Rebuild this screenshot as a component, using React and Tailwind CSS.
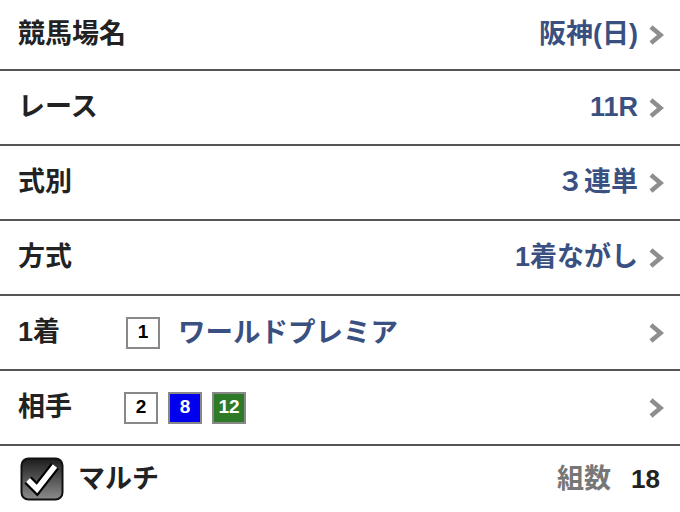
import React from "react";

const font = { fontFamily: '"Liberation Sans", "Noto Sans CJK JP", sans-serif' };

function Chevron() {
  return (
    <svg width="16" height="22" viewBox="0 0 16 22" className="shrink-0">
      <polyline points="3,3 12.5,11 3,19" fill="none" stroke="#8e8e8e" strokeWidth="4.5" strokeLinejoin="miter" />
    </svg>
  );
}

function Row({ label, value, h = "h-[75px]" }) {
  return (
    <div className={`${h} border-b-2 border-[#555] flex items-center pl-[18px] pr-[16px]`}>
      <div className="text-[27px] font-bold text-[#222] flex-1">{label}</div>
      <div className="text-[27px] font-bold text-[#3a5081] mr-[10px]">{value}</div>
      <Chevron />
    </div>
  );
}

function Badge({ n, cls }) {
  return (
    <div className={`w-[34px] h-[32px] border-2 border-[#888] flex items-center justify-center text-[19px] font-bold ${cls}`}>
      {n}
    </div>
  );
}

function Check() {
  return (
    <svg width="44" height="44" viewBox="0 0 44 44">
      <defs>
        <linearGradient id="cg" x1="0" y1="0" x2="0" y2="1">
          <stop offset="0" stopColor="#1c1c1c" />
          <stop offset="1" stopColor="#8c8c8c" />
        </linearGradient>
      </defs>
      <rect x="1.5" y="1.5" width="41" height="41" rx="7" fill="url(#cg)" stroke="#111" strokeWidth="2" />
      <path d="M8 23 L17 32 L35 9" fill="none" stroke="#000" strokeWidth="10" strokeLinejoin="miter" />
      <path d="M8 23 L17 32 L35 9" fill="none" stroke="#fff" strokeWidth="5.5" strokeLinejoin="miter" />
    </svg>
  );
}

export default function App() {
  return (
    <div className="w-[680px] h-[512px] overflow-hidden bg-white" style={font}>
      <Row label="競馬場名" value="阪神(日)" h="h-[71px]" />
      <Row label="レース" value="11R" />
      <Row label="式別" value="３連単" />
      <Row label="方式" value="1着ながし" />
      <div className="h-[75px] border-b-2 border-[#555] flex items-center pl-[18px] pr-[16px]">
        <div className="w-[108px] text-[27px] font-bold text-[#222]">1着</div>
        <Badge n="1" cls="bg-white text-black" />
        <div className="ml-[18px] text-[27.5px] font-bold text-[#3a5081] flex-1">ワールドプレミア</div>
        <Chevron />
      </div>
      <div className="h-[75px] border-b-2 border-[#555] flex items-center pl-[18px] pr-[16px]">
        <div className="w-[106px] text-[27px] font-bold text-[#222]">相手</div>
        <div className="flex gap-[10px] flex-1">
          <Badge n="2" cls="bg-white text-black" />
          <Badge n="8" cls="bg-[#0000ee] text-white" />
          <Badge n="12" cls="bg-[#2f7a26] text-white" />
        </div>
        <Chevron />
      </div>
      <div className="h-[66px] flex items-center pl-[20px] pr-[20px]">
        <Check />
        <div className="ml-[14px] text-[27px] font-bold text-[#222] flex-1">マルチ</div>
        <div className="text-[27px] font-bold text-[#777]">組数</div>
        <div className="ml-[20px] text-[26px] font-bold text-[#222]">18</div>
      </div>
    </div>
  );
}
